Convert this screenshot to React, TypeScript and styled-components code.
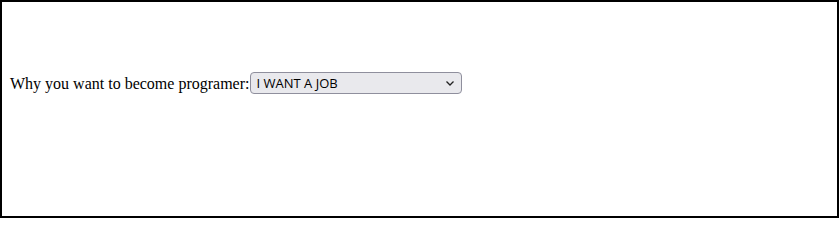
import React from 'react';
import styled, { createGlobalStyle } from 'styled-components';

const GlobalStyle = createGlobalStyle`
  html, body {
    margin: 0;
    padding: 0;
    background: #fff;
  }
`;

const Frame = styled.div`
  box-sizing: border-box;
  width: 839px;
  height: 218px;
  border: 2px solid #000;
  padding: 70px 8px 0;
  font-family: 'Liberation Serif', 'Times New Roman', serif;
  font-size: 16px;
  color: #000;
`;

const Row = styled.div`
  display: flex;
  align-items: flex-start;
`;

const Label = styled.label`
  line-height: 22px;
  padding-top: 1px;
`;

const SelectWrap = styled.div`
  position: relative;
  display: inline-flex;
  margin-left: 1px;
`;

const Select = styled.select`
  appearance: none;
  -webkit-appearance: none;
  box-sizing: border-box;
  width: 212px;
  height: 22px;
  margin: 0;
  padding: 1px 24px 0 5px;
  border: 1px solid #8f8f9d;
  border-radius: 4px;
  background: #e9e9ed;
  color: #000;
  font-family: 'Open Sans', 'Noto Sans', sans-serif;
  font-size: 13px;
  line-height: 19px;
  outline: none;
`;

const Chevron = styled.svg`
  position: absolute;
  right: 7px;
  top: 8px;
  width: 10px;
  height: 7px;
  pointer-events: none;
`;

export default function App() {
  return (
    <>
      <GlobalStyle />
      <Frame>
        <Row>
          <Label htmlFor="reason">Why you want to become programer:</Label>
          <SelectWrap>
            <Select id="reason" defaultValue="job">
              <option value="job">I WANT A JOB</option>
              <option value="fun">I LIKE IT</option>
              <option value="money">MONEY</option>
            </Select>
            <Chevron viewBox="0 0 10 7">
              <path d="M1.5 1.5 L5 5 L8.5 1.5" fill="none" stroke="#222" strokeWidth="1.3" />
            </Chevron>
          </SelectWrap>
        </Row>
      </Frame>
    </>
  );
}
